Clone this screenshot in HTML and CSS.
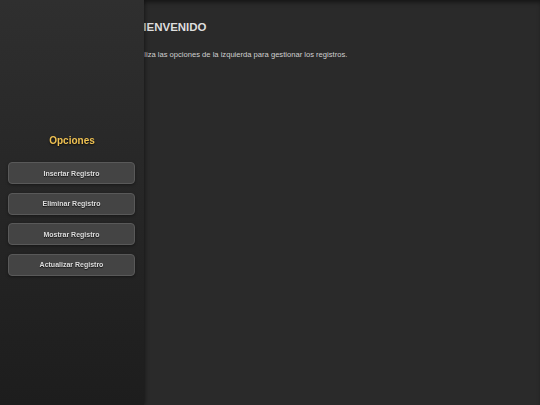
FILE: index.html
```html
<!DOCTYPE html>
<html lang="es">
<head>
<meta charset="utf-8">
<title>Registros</title>
<link rel="stylesheet" href="styles.css">
</head>
<body>
<div class="page">
  <main class="main">
    <h1 class="title">BIENVENIDO</h1>
    <p class="intro">Utiliza las opciones de la izquierda para gestionar los registros.</p>
  </main>
  <aside class="sidebar">
    <h2 class="side-title">Opciones</h2>
    <nav class="menu">
      <button class="btn">Insertar Registro</button>
      <button class="btn">Eliminar Registro</button>
      <button class="btn">Mostrar Registro</button>
      <button class="btn">Actualizar Registro</button>
    </nav>
  </aside>
</div>
</body>
</html>
```
FILE: styles.css
```css
html, body {
  margin: 0;
  padding: 0;
  height: 100%;
}
body {
  background: #2a2a2a;
  font-family: "Liberation Sans", Arial, sans-serif;
  color: #dcdcdc;
}
.page {
  height: 100%;
}
.main {
  height: 100%;
  box-sizing: border-box;
  padding: 20px 20px 0 135px;
  box-shadow: inset 0 4px 5px -2px rgba(0, 0, 0, 0.55);
}
.title {
  margin: 0;
  font-size: 11.5px;
  font-weight: bold;
  color: #dedede;
  line-height: 14px;
}
.intro {
  margin: 16px 0 0;
  font-size: 7.6px;
  line-height: 10px;
  color: #d0d0d0;
}
.sidebar {
  position: fixed;
  top: 0;
  left: 0;
  bottom: 0;
  width: 144px;
  box-sizing: border-box;
  padding: 134px 8px 0 8px;
  background: linear-gradient(to bottom, #2f2f2f 0%, #262626 50%, #1d1d1d 100%);
  box-shadow: 1px 0 4px rgba(0, 0, 0, 0.45);
  display: flex;
  flex-direction: column;
  align-items: stretch;
}
.side-title {
  margin: 0 0 15px;
  text-align: center;
  font-size: 10px;
  line-height: 13px;
  font-weight: bold;
  color: #efc152;
  text-shadow: 0 1px 2px rgba(0, 0, 0, 0.8);
}
.menu {
  display: flex;
  flex-direction: column;
  gap: 8.5px;
  width: 127px;
}
.btn {
  height: 22px;
  margin: 0;
  padding: 0;
  border: 1px solid #595959;
  border-radius: 4px;
  background: #444444;
  color: #dddddd;
  font-family: "Liberation Sans", Arial, sans-serif;
  font-size: 7px;
  font-weight: bold;
  text-shadow: 0 1px 1px rgba(0, 0, 0, 0.7);
  box-shadow: 0 1px 3px rgba(0, 0, 0, 0.4);
}
```
